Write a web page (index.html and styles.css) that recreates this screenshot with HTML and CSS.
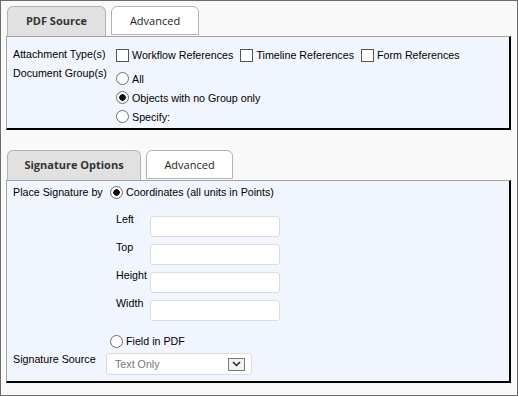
FILE: index.html
```html
<!DOCTYPE html>
<html lang="en">

<head>
    <meta charset="UTF-8">
    <title>PDF Options</title>
    <link rel="stylesheet" href="styles.css">
</head>

<body>
    <div class="frame">
        <!-- PDF Source tabs -->
        <div class="tabs">
            <div class="tab active source-tab">PDF Source</div>
            <div class="tab adv-tab">Advanced</div>
        </div>
        <div class="panel source-panel">
            <div class="row">
                <span class="label">Attachment Type(s)</span>
                <div class="options inline">
                    <label class="opt"><input type="checkbox">Workflow References</label>
                    <label class="opt"><input type="checkbox">Timeline References</label>
                    <label class="opt"><input type="checkbox">Form References</label>
                </div>
            </div>
            <div class="row">
                <span class="label">Document Group(s)</span>
                <div class="options stacked">
                    <label class="opt"><input type="radio" name="group">All</label>
                    <label class="opt"><input type="radio" name="group" checked>Objects with no Group only</label>
                    <label class="opt"><input type="radio" name="group">Specify:</label>
                </div>
            </div>
        </div>

        <!-- Signature tabs -->
        <div class="tabs second">
            <div class="tab active sig-tab">Signature Options</div>
            <div class="tab adv-tab2">Advanced</div>
        </div>
        <div class="panel sig-panel">
            <div class="row">
                <span class="label">Place Signature by</span>
                <div class="options">
                    <label class="opt"><input type="radio" name="place" checked>Coordinates (all units in Points)</label>
                    <div class="coords">
                        <span class="coord-label">Left</span><input type="text" class="text-input">
                        <span class="coord-label">Top</span><input type="text" class="text-input">
                        <span class="coord-label">Height</span><input type="text" class="text-input">
                        <span class="coord-label">Width</span><input type="text" class="text-input">
                    </div>
                    <label class="opt field-opt"><input type="radio" name="place">Field in PDF</label>
                </div>
            </div>
            <div class="row source-row">
                <span class="label">Signature Source</span>
                <div class="select">
                    <span>Text Only</span>
                    <span class="arrow">
                        <svg width="15" height="10" viewBox="0 0 15 10">
                            <path d="M4 3 L7.5 6.5 L11 3" fill="none" stroke="#222" stroke-width="1.5"/>
                        </svg>
                    </span>
                </div>
            </div>
        </div>
    </div>
</body>

</html>
```

FILE: styles.css
```css
body {
    margin: 0;
    font-family: 'Liberation Sans', Arial, sans-serif;
    font-size: 10.7px;
    color: #000;
}

/* Outer window */
.frame {
    box-sizing: border-box;
    width: 518px;
    height: 396px;
    border: 1px solid #6b6b6b;
    background-color: #f9f9f9;
    padding: 5px 6px 0 5px;
}

/* Tabs */
.tabs {
    display: flex;
    align-items: flex-start;
    gap: 5px;
    padding-left: 1px;
}

.tabs.second {
    margin-top: 20px;
}

.tab {
    box-sizing: border-box;
    height: 30px;
    line-height: 28px;
    border: 1px solid #b3b3b3;
    border-bottom: none;
    border-radius: 6px 6px 0 0;
    background-color: #fff;
    text-align: center;
    font-family: 'Open Sans', 'Noto Sans', sans-serif;
    font-size: 11px;
    color: #222;
}

.tab.active {
    background-color: #e1e1e1;
    font-weight: bold;
    color: #333;
}

.tab.adv-tab,
.tab.adv-tab2 {
    height: 29px;
    border-bottom: 1px solid #b3b3b3;
}

.source-tab { width: 99px; }
.adv-tab { width: 88px; }
.sig-tab { width: 134px; }
.adv-tab2 { width: 87px; }

/* Panels */
.panel {
    background-color: #f1f6fe;
    border-left: 1px solid #a3a3a3;
    border-top: 1px solid #a3a3a3;
    border-right: 2px solid #000;
    border-bottom: 2px solid #000;
    padding: 0 6px;
}

.source-panel {
    box-sizing: border-box;
    height: 94px;
    padding-top: 8px;
}

.sig-panel {
    padding-top: 2px;
    padding-bottom: 6px;
}

.row {
    display: grid;
    align-items: start;
}

.source-panel .row {
    grid-template-columns: 99px 1fr;
}

.sig-panel .row {
    grid-template-columns: 93px 1fr;
}

.label {
    line-height: 18px;
}

/* Checkbox / radio options */
.options.inline {
    display: flex;
}

.inline .opt {
    padding-top: 1px;
    margin-right: 3px;
}

.options.stacked {
    display: flex;
    flex-direction: column;
    padding-top: 5px;
}

.stacked .opt {
    height: 19px;
}

.opt {
    display: flex;
    align-items: center;
    height: 18px;
    margin-right: 4px;
}

.opt input {
    appearance: none;
    box-sizing: border-box;
    width: 13px;
    height: 13px;
    margin: 0 3px 0 4px;
    background-color: #fff;
    border: 1px solid #555;
}

.opt input[type="radio"] {
    border-radius: 50%;
    border-color: #6e6e6e;
}

.opt input[type="radio"]:checked {
    background: radial-gradient(circle, #111 0 3px, #fff 3.5px);
}

/* Coordinate fields */
.coords {
    display: grid;
    grid-template-columns: 34px 130px;
    row-gap: 7px;
    margin: 15px 0 0 10px;
}

.coord-label {
    line-height: 13px;
    margin-top: -3px;
}

.text-input {
    box-sizing: border-box;
    width: 130px;
    height: 21px;
    margin: 0;
    border: 1px solid #dcdcdc;
    border-radius: 3px;
    background-color: #fff;
}

.field-opt {
    margin-top: 11px;
}

/* Signature source select */
.source-row {
    margin-top: 3px;
}

.source-row .label {
    line-height: 13px;
}

.select {
    box-sizing: border-box;
    width: 146px;
    height: 22px;
    display: flex;
    align-items: center;
    justify-content: space-between;
    padding: 0 6px 0 8px;
    border: 1px solid #dcdcdc;
    border-radius: 3px;
    background-color: #fff;
    color: #777;
}

.arrow {
    box-sizing: border-box;
    width: 17px;
    height: 13px;
    display: flex;
    align-items: center;
    justify-content: center;
    border: 1px solid #7a7a7a;
    background-color: #f2f2f2;
}
```
